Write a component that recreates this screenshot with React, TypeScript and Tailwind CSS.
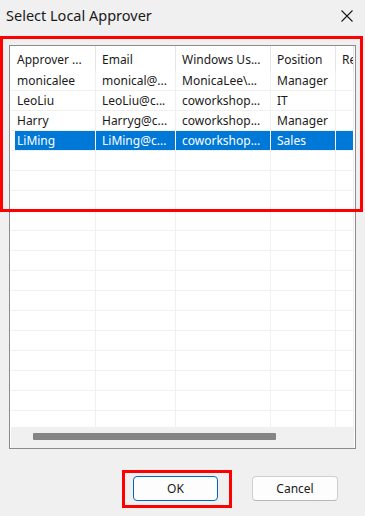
// column widths of the list view, left to right
const cols = [85, 80, 95, 65, 18];

const headers = ['Approver ...', 'Email', 'Windows Us...', 'Position', 'Re'];

const rows = [
  ['monicalee', 'monical@...', 'MonicaLee\\...', 'Manager', ''],
  ['LeoLiu', 'LeoLiu@c...', 'coworkshop...', 'IT', ''],
  ['Harry', 'Harryg@c...', 'coworkshop...', 'Manager', ''],
  ['LiMing', 'LiMing@c...', 'coworkshop...', 'Sales', ''],
];

const selected = 3;
const totalRows = 18;

export default function App() {
  return (
    <div
      className="relative w-[365px] h-[516px] bg-[#f0f0f0] text-[#1a1a1a] overflow-hidden"
      style={{ fontFamily: '"Noto Sans", "Open Sans", sans-serif' }}
    >
      {/* title bar */}
      <div className="flex items-center justify-between h-[31px] pl-[6px] pr-[12px]">
        <span className="text-[14.5px] leading-none">Select Local Approver</span>
        <svg width="12" height="12" viewBox="0 0 12 12" className="text-[#1a1a1a]">
          <path d="M0.5 0.5 L11.5 11.5 M11.5 0.5 L0.5 11.5" stroke="currentColor" strokeWidth="1.1" fill="none" />
        </svg>
      </div>

      {/* list view */}
      <div className="mt-[14px] ml-[9px] w-[347px] h-[404px] border border-[#8a8a90] bg-white flex flex-col pl-[1px] pr-[1px]">
        <div className="flex h-[25px] shrink-0">
          {headers.map((h, i) => (
            <div
              key={i}
              className="flex items-center h-full border-r border-[#e5e5e5] pl-[6px] pt-[2px] text-[12px] whitespace-nowrap overflow-hidden"
              style={{ width: cols[i] }}
            >
              {h}
            </div>
          ))}
        </div>

        <div className="flex-1 overflow-hidden">
          {Array.from({ length: totalRows }).map((_, r) => {
            const row = rows[r];
            const isSel = r === selected;
            return (
              <div key={r} className="flex h-[20px] border-b border-[#f0f0f0]">
                {cols.map((w, i) => (
                  <div
                    key={i}
                    className={`h-full flex border-r ${isSel ? 'border-white' : 'border-[#f0f0f0]'}`}
                    style={{ width: w }}
                  >
                    <div
                      className={`flex-1 flex items-center pt-[1px] text-[12px] whitespace-nowrap overflow-hidden ${
                        i === 0 ? 'ml-[4px] pl-[2px]' : 'pl-[6px]'
                      } ${isSel ? 'bg-[#0078d7] text-white' : ''}`}
                    >
                      {row ? row[i] : ''}
                    </div>
                  </div>
                ))}
              </div>
            );
          })}
        </div>

        {/* horizontal scrollbar */}
        <div className="h-[21px] shrink-0 bg-[#f0f0f0] pt-[6px] pl-[22px]">
          <div className="w-[243px] h-[7px] bg-[#858585] rounded-[1px]" />
        </div>
      </div>

      {/* buttons */}
      <div className="flex justify-end gap-[34px] mt-[27px] pr-[27px]">
        <button className="w-[85px] h-[25px] rounded-[4px] border border-[#0067c0] bg-[#fdfdfd] text-[12px]">
          OK
        </button>
        <button className="w-[86px] h-[25px] rounded-[4px] border border-[#d0d0d0] border-b-[#b8b8b8] bg-[#fdfdfd] text-[12px]">
          Cancel
        </button>
      </div>

      {/* red annotation boxes */}
      <div className="absolute left-0 top-[36px] w-[363px] h-[176px] border-[3px] border-[#ff0000] pointer-events-none" />
      <div className="absolute left-[122px] top-[470px] w-[110px] h-[38px] border-[3px] border-[#ff0000] pointer-events-none" />
    </div>
  );
}
